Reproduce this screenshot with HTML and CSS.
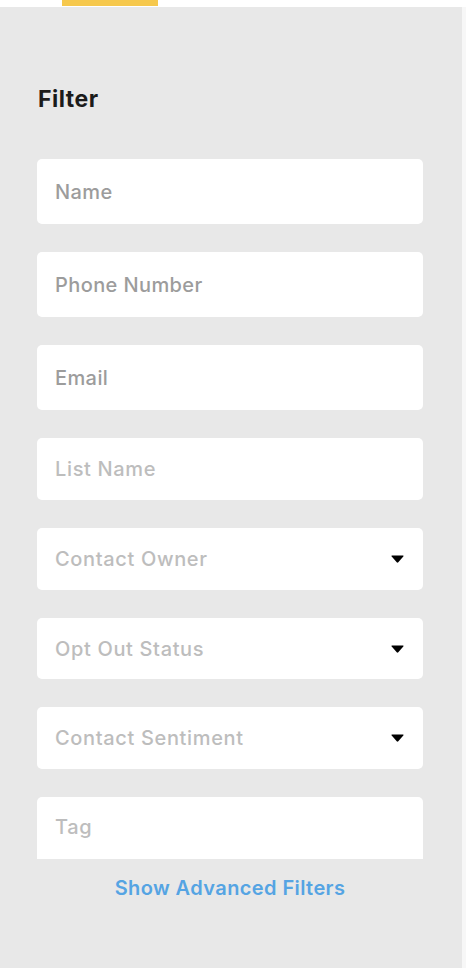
FILE: index.html
```html
<!DOCTYPE html>
<html>
<head>
  <title>Contacts Filter</title>
  <link rel="stylesheet" href="styles.css">
</head>
<body>
  <div class="topbar">
    <span class="tab-indicator"></span>
  </div>

  <div class="page">
    <aside class="panel">
      <h2>Filter</h2>

      <div class="fields">
        <div class="field tall"><input type="text" placeholder="Name"></div>
        <div class="field tall"><input type="text" placeholder="Phone Number"></div>
        <div class="field tall"><input type="text" placeholder="Email"></div>
        <div class="field light"><input type="text" placeholder="List Name"></div>
        <div class="field light select">
          <span>Contact Owner</span>
          <svg class="caret" width="13" height="8" viewBox="0 0 13 8"><path d="M1 0.5 H12 Q13 0.5 12.3 1.4 L7.3 7.3 Q6.5 8.1 5.7 7.3 L0.7 1.4 Q0 0.5 1 0.5 Z"/></svg>
        </div>
        <div class="field light select short">
          <span>Opt Out Status</span>
          <svg class="caret" width="13" height="8" viewBox="0 0 13 8"><path d="M1 0.5 H12 Q13 0.5 12.3 1.4 L7.3 7.3 Q6.5 8.1 5.7 7.3 L0.7 1.4 Q0 0.5 1 0.5 Z"/></svg>
        </div>
        <div class="field light select">
          <span>Contact Sentiment</span>
          <svg class="caret" width="13" height="8" viewBox="0 0 13 8"><path d="M1 0.5 H12 Q13 0.5 12.3 1.4 L7.3 7.3 Q6.5 8.1 5.7 7.3 L0.7 1.4 Q0 0.5 1 0.5 Z"/></svg>
        </div>
        <div class="field light tag"><input type="text" placeholder="Tag"></div>
      </div>

      <a class="advanced" href="#">Show Advanced Filters</a>
    </aside>
    <div class="scroll-edge"></div>
  </div>
</body>
</html>
```

FILE: styles.css
```css
/* filter sidebar */
body {
  margin: 0;
  font-family: Inter, "Noto Sans", sans-serif;
  background: #fff;
}

.topbar {
  height: 7px;
  background: #fff;
}

.tab-indicator {
  display: block;
  margin-left: 62px;
  width: 96px;
  height: 6px;
  background: #f6c84c;
}

.page {
  display: flex;
  height: 961px;
}

.panel {
  width: 462px;
  background: #e8e8e8;
  padding: 0 39px 0 37px;
  box-sizing: border-box;
}

.scroll-edge {
  flex: 1;
  background: #f7f7f7;
}

h2 {
  margin: 79px 0 0 1px;
  height: 47px;
  font-size: 23px;
  font-weight: 700;
  letter-spacing: 0.5px;
  color: #1b1b1b;
  line-height: 26px;
}

.fields {
  display: flex;
  flex-direction: column;
  gap: 28px;
  height: 700px;
  overflow: hidden;
  margin-top: 26px;
}

.field {
  flex: none;
  height: 62px;
  background: #fff;
  border-radius: 5px;
  display: flex;
  align-items: center;
  padding: 0 18px;
  font-size: 20px;
  font-weight: 500;
  letter-spacing: 0.4px;
}

.field.light {
  letter-spacing: 0.65px;
}

.field.tall {
  height: 65px;
}

.field.short {
  height: 61px;
}

.field.tag {
  height: 68px;
  align-items: flex-start;
  padding-top: 18px;
  box-sizing: border-box;
}

.field input {
  border: none;
  outline: none;
  background: transparent;
  width: 100%;
  padding: 0;
  font-family: inherit;
  font-size: inherit;
  font-weight: inherit;
  letter-spacing: inherit;
}

.field.tall input::placeholder {
  color: #9c9c9c;
}

.field.light input::placeholder,
.field.select span {
  color: #bdbdbd;
}

.field.select {
  justify-content: space-between;
}

.caret {
  fill: #000;
  margin-right: 1px;
}

.advanced {
  display: block;
  text-align: center;
  margin-top: 17px;
  font-size: 20px;
  font-weight: 600;
  letter-spacing: 0.4px;
  color: #55a4e3;
  text-decoration: none;
}
```
